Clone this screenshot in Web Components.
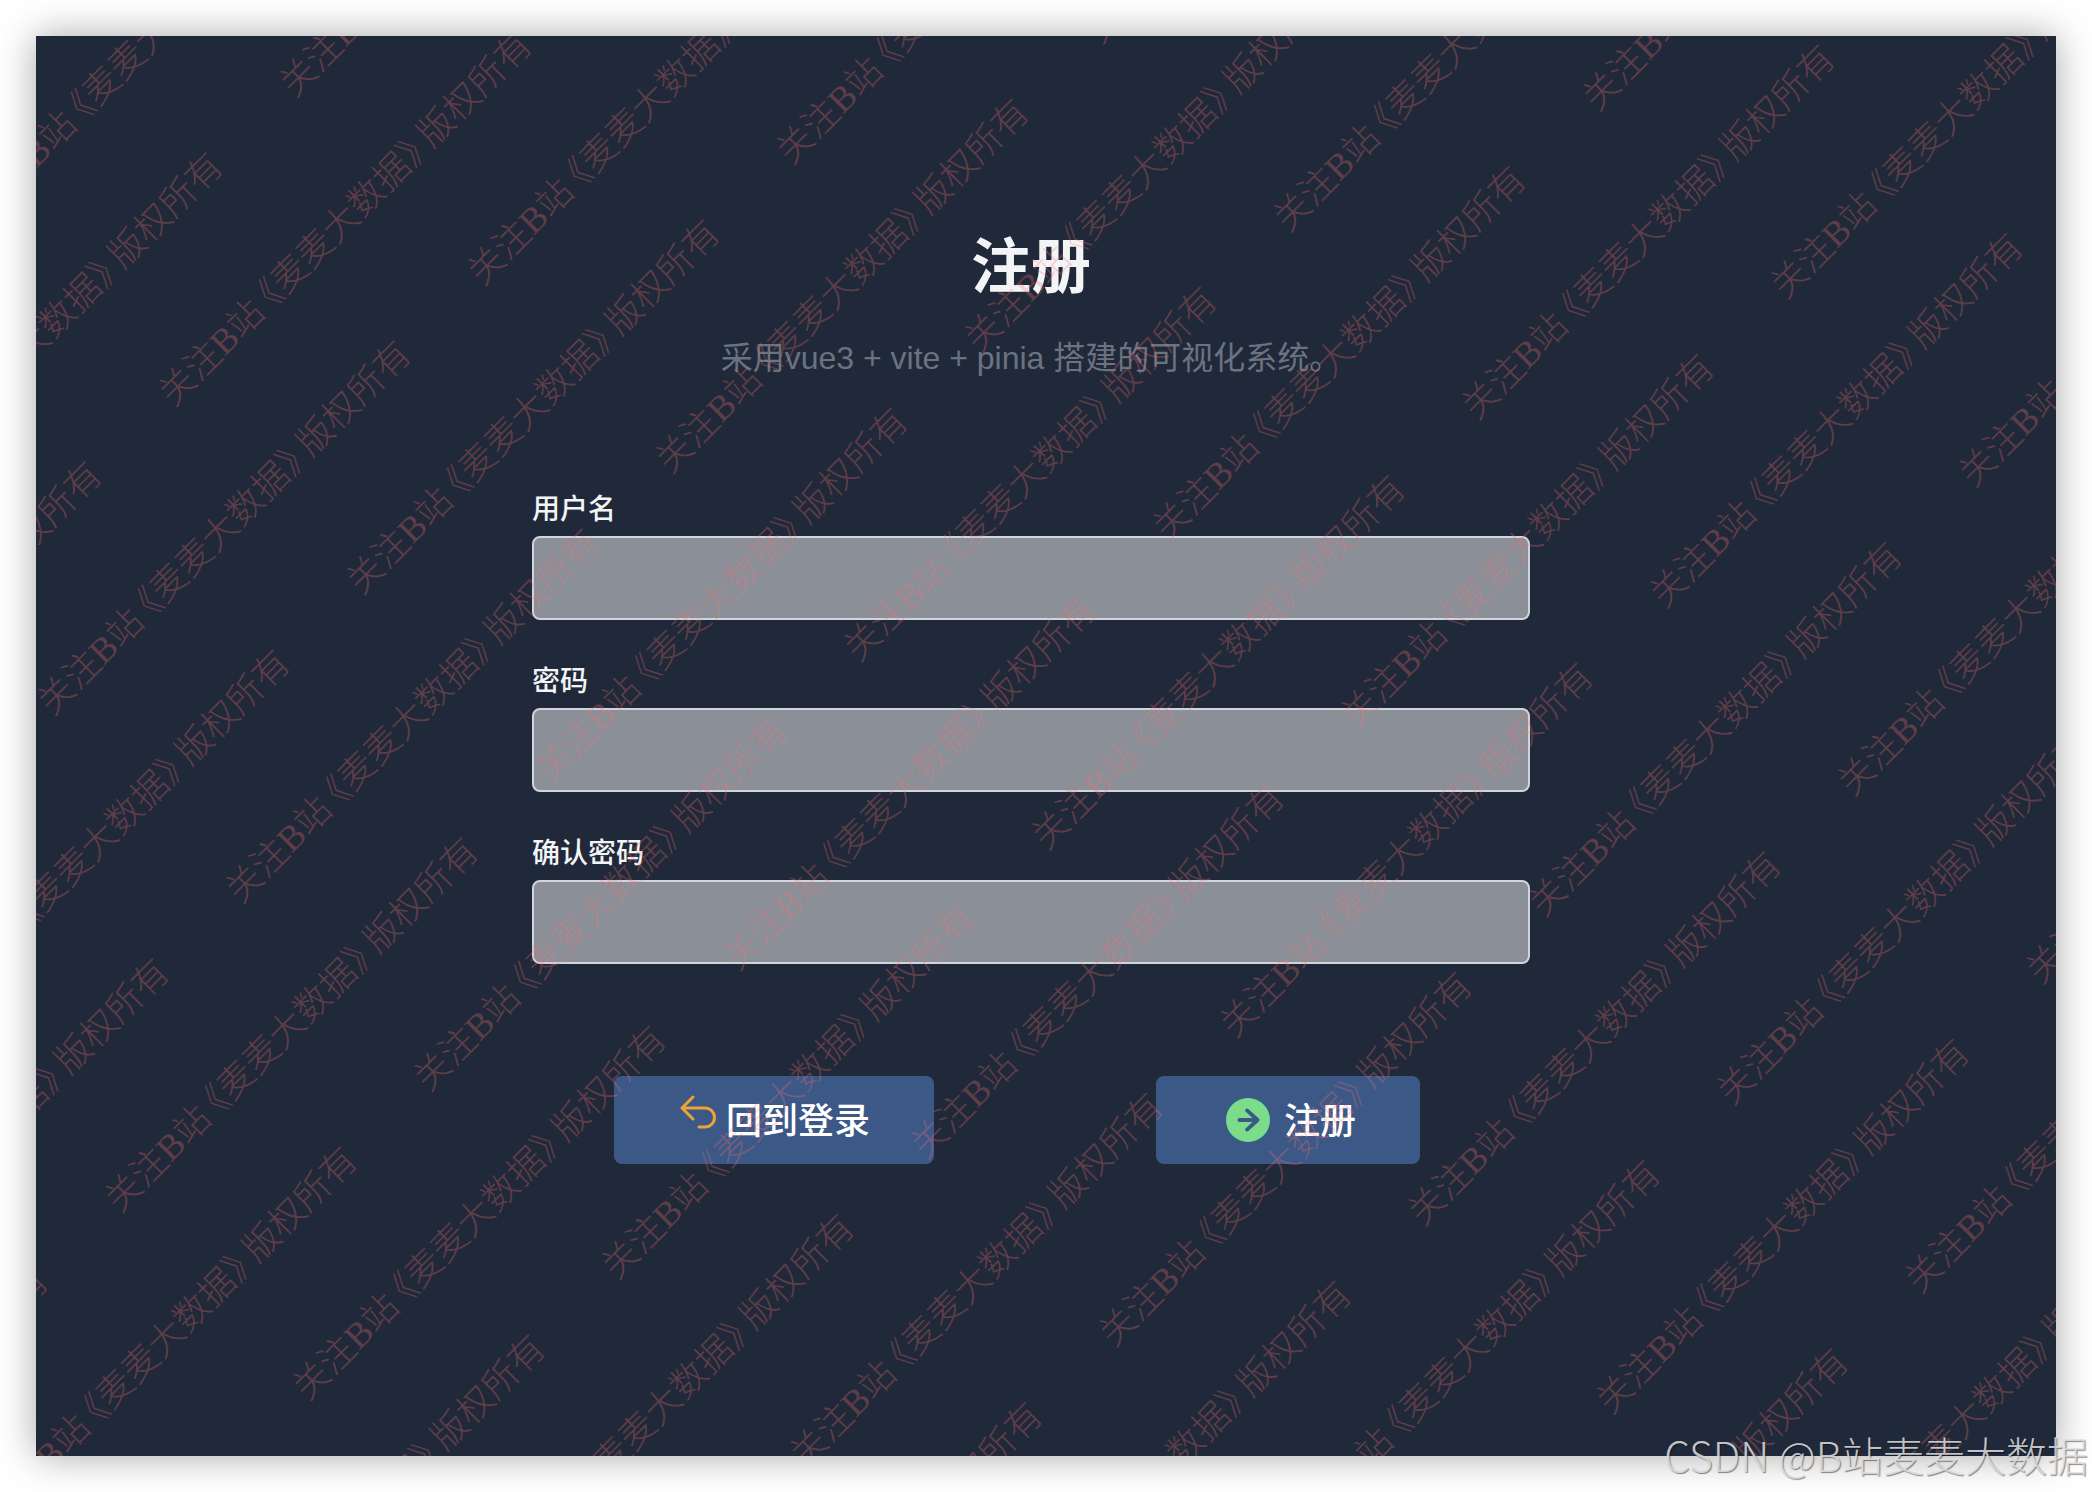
<!DOCTYPE html>
<html lang="zh-CN">
<head>
<meta charset="UTF-8">
<meta name="viewport" content="width=device-width, initial-scale=1.0">
<title>注册</title>
<style>
    html {
        height: 100%;
    }
    body {
        display: flex;
        box-sizing: border-box;
        min-height: 100%;
        margin: 0;
        padding: 36px;
        background: #fff;
        font-family: 'Liberation Sans', 'Noto Sans CJK SC', sans-serif;
    }
</style>
</head>
<body>
<register-page></register-page>
<site-credit>CSDN @B站麦麦大数据</site-credit>

<script>
class WatermarkLayer extends HTMLElement {

    constructor() {
        super();
        this.root = this.attachShadow({ mode: 'open' });
    }

    connectedCallback() {
        const text = this.getAttribute('text');
        const row = `<div class="row">${`<span>${text}</span>`.repeat(5)}</div>`;

        this.root.innerHTML = `
            <style>
                :host {
                    position: absolute;
                    inset: 0;
                    overflow: hidden;
                    pointer-events: none;
                    user-select: none;
                }
                .field {
                    position: absolute;
                    left: -1124px;
                    top: 830px;
                    transform: rotate(-45deg);
                    transform-origin: 0 0;
                }
                .row {
                    display: flex;
                    height: 133px;
                }
                .row:nth-child(even) {
                    padding-left: 304px;
                }
                /* halt: half-width book title marks */
                span {
                    flex: none;
                    width: 608px;
                    font: 300 36px/48px 'Liberation Serif', 'Noto Sans CJK SC', serif;
                    font-feature-settings: 'halt';
                    white-space: nowrap;
                    color: rgba(248, 113, 113, 0.3);
                }
            </style>
            <div class="field" aria-hidden="true">${row.repeat(21)}</div>
        `;
    }
}

class FormField extends HTMLElement {

    constructor() {
        super();
        this.root = this.attachShadow({ mode: 'open' });
    }

    connectedCallback() {
        this.root.innerHTML = `
            <style>
                :host {
                    display: block;
                }
                label {
                    display: block;
                    margin-bottom: 6px;
                    font-size: 28px;
                    line-height: 40px;
                    font-weight: 500;
                    color: #f3f4f6;
                }
                input {
                    display: block;
                    box-sizing: border-box;
                    width: 100%;
                    height: 84px;
                    padding: 16px 24px;
                    border: 2px solid #d1d5db;
                    border-radius: 8px;
                    outline: none;
                    background: #8b8f97;
                    color: #f3f4f6;
                    font: inherit;
                    font-size: 28px;
                }
            </style>
            <label for="field">${this.getAttribute('label')}</label>
            <input id="field" name="${this.getAttribute('name')}" type="${this.getAttribute('type') || 'text'}">
        `;
    }
}

class IconButton extends HTMLElement {

    constructor() {
        super();
        this.root = this.attachShadow({ mode: 'open' });
        this.root.innerHTML = `
            <style>
                :host {
                    display: block;
                }
                button {
                    display: flex;
                    align-items: center;
                    height: 88px;
                    padding: 0 64px 4px 48px;
                    border: 0;
                    border-radius: 8px;
                    background: #3c5886;
                    color: #fff;
                    font: inherit;
                    font-size: 36px;
                    font-weight: 500;
                    cursor: pointer;
                }
            </style>
            <button type="button"><slot name="icon"></slot><slot></slot></button>
        `;
    }
}

class RegisterPage extends HTMLElement {

    constructor() {
        super();
        this.root = this.attachShadow({ mode: 'open' });
        this.root.innerHTML = `
            <style>
                :host {
                    position: relative;
                    display: block;
                    flex: 1;
                    box-sizing: border-box;
                    padding: 186px 30px 0 0;
                    background: #202939;
                    box-shadow: 0 0 36px rgba(0, 0, 0, 0.35);
                }
                header {
                    text-align: center;
                }
                h1 {
                    margin: 0;
                    font-size: 60px;
                    line-height: 92px;
                    font-weight: 700;
                    color: #f3f4f6;
                }
                p {
                    margin: 20px 0 0;
                    font-size: 32px;
                    line-height: 48px;
                    color: #6b7280;
                }
                form {
                    display: grid;
                    gap: 42px;
                    width: calc(50% + 3px);
                    margin: 108px auto 0;
                }
                .actions {
                    display: flex;
                    justify-content: center;
                    gap: 222px;
                    margin-top: 70px;
                    padding-right: 28px;
                }
                svg {
                    flex: none;
                }
                .back {
                    width: 36px;
                    height: 36px;
                    margin: 0 10px 10px 18px;
                }
                .next {
                    width: 44px;
                    height: 44px;
                    margin: 4px 14px 0 22px;
                }
            </style>
            <header>
                <h1>注册</h1>
                <p>采用vue3 + vite + pinia 搭建的可视化系统。</p>
            </header>
            <form>
                <form-field label="用户名" name="username"></form-field>
                <form-field label="密码" name="password" type="password"></form-field>
                <form-field label="确认密码" name="confirm" type="password"></form-field>
                <div class="actions">
                    <icon-button>
                        <svg slot="icon" class="back" viewBox="0 0 36 36" fill="none" stroke="#eba33a" stroke-width="3" stroke-linecap="round" stroke-linejoin="round">
                            <path d="M13 2 2 13l11 11M2 13h23a9 9 0 0 1 0 19h-6"/>
                        </svg>回到登录
                    </icon-button>
                    <icon-button>
                        <svg slot="icon" class="next" viewBox="0 0 46 46" fill="none" stroke="#3c5886" stroke-width="4" stroke-linecap="round" stroke-linejoin="round">
                            <circle cx="23" cy="23" r="23" fill="#7bdc8a" stroke="none"/>
                            <path d="M14 23h19M22 13l11 10-11 10"/>
                        </svg>注册
                    </icon-button>
                </div>
            </form>
            <watermark-layer text="关注B站 《麦麦大数据》 版权所有"></watermark-layer>
        `;
    }
}

class SiteCredit extends HTMLElement {

    constructor() {
        super();
        this.root = this.attachShadow({ mode: 'open' });
        this.root.innerHTML = `
            <style>
                :host {
                    position: absolute;
                    right: 4px;
                    bottom: 8px;
                    font: 300 41px/60px 'Noto Sans CJK SC', sans-serif;
                    color: rgba(225, 225, 228, 0.85);
                    text-shadow: 1px 1px 1px rgba(0, 0, 0, 0.45);
                    white-space: nowrap;
                }
            </style>
            <slot></slot>
        `;
    }
}

customElements.define('watermark-layer', WatermarkLayer);
customElements.define('form-field', FormField);
customElements.define('icon-button', IconButton);
customElements.define('register-page', RegisterPage);
customElements.define('site-credit', SiteCredit);
</script>
</body>
</html>
